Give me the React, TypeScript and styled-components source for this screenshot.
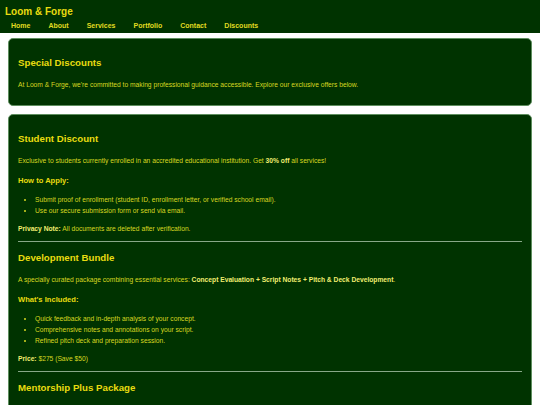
import styled, { createGlobalStyle } from "styled-components";

const GlobalStyle = createGlobalStyle`
  body {
    margin: 0;
    background: #ffffff;
    font-family: "Liberation Sans", Arial, sans-serif;
    color: #d8d820;
  }
`;

const Header = styled.header`
  background: #003300;
  padding: 6px 5px 3px;
`;

const Title = styled.h1`
  margin: 0;
  font-size: 10px;
  line-height: 12px;
  font-weight: bold;
  color: #e8dc10;
`;

const Nav = styled.nav`
  display: flex;
  gap: 18px;
  padding: 4px 0 0 6px;
  line-height: 8px;
`;

const NavLink = styled.a`
  font-size: 7px;
  font-weight: bold;
  color: #e0dc20;
  text-decoration: none;
`;

const Main = styled.main`
  display: flex;
  flex-direction: column;
  gap: 8px;
  padding: 5px 8px 8px;
`;

const Card = styled.section`
  background: #003300;
  border: 1px solid #5f8f5f;
  border-radius: 5px;
  padding: 9px 9px 8px;
`;

const Block = styled.div<{ $divider?: boolean }>`
  border-bottom: ${(p) => (p.$divider ? "1.5px solid #88a888" : "none")};

  & + & {
    padding-top: 1px;
  }
`;

const Heading = styled.h2`
  margin: 9px 0 12px;
  font-size: 9.7px;
  line-height: 12px;
  font-weight: bold;
  color: #e8dc10;
`;

const SubHeading = styled.h3`
  margin: 11px 0 9px;
  font-size: 7.6px;
  line-height: 9px;
  font-weight: bold;
  color: #e8dc10;
`;

const Text = styled.p`
  margin: 8px 0;
  font-size: 6.7px;
  line-height: 8px;
`;

const List = styled.ul`
  margin: 9px 0;
  padding-left: 17px;
  font-size: 6.7px;
  line-height: 11px;
`;

const Strong = styled.strong`
  font-weight: bold;
  color: #f0ee70;
`;

export default function App() {
  return (
    <>
      <GlobalStyle />
      <Header>
        <Title>Loom &amp; Forge</Title>
        <Nav>
          {["Home", "About", "Services", "Portfolio", "Contact", "Discounts"].map((l) => (
            <NavLink key={l} href="#">
              {l}
            </NavLink>
          ))}
        </Nav>
      </Header>
      <Main>
        <Card>
          <Heading>Special Discounts</Heading>
          <Text>
            At Loom &amp; Forge, we're committed to making professional guidance accessible. Explore
            our exclusive offers below.
          </Text>
        </Card>
        <Card>
          <Block $divider>
            <Heading>Student Discount</Heading>
            <Text>
              Exclusive to students currently enrolled in an accredited educational institution. Get{" "}
              <Strong>30% off</Strong> all services!
            </Text>
            <SubHeading>How to Apply:</SubHeading>
            <List>
              <li>Submit proof of enrollment (student ID, enrollment letter, or verified school email).</li>
              <li>Use our secure submission form or send via email.</li>
            </List>
            <Text>
              <Strong>Privacy Note:</Strong> All documents are deleted after verification.
            </Text>
          </Block>
          <Block $divider>
            <Heading>Development Bundle</Heading>
            <Text>
              A specially curated package combining essential services:{" "}
              <Strong>Concept Evaluation + Script Notes + Pitch &amp; Deck Development</Strong>.
            </Text>
            <SubHeading>What's Included:</SubHeading>
            <List>
              <li>Quick feedback and in-depth analysis of your concept.</li>
              <li>Comprehensive notes and annotations on your script.</li>
              <li>Refined pitch deck and preparation session.</li>
            </List>
            <Text>
              <Strong>Price:</Strong> $275 (Save $50)
            </Text>
          </Block>
          <Block>
            <Heading>Mentorship Plus Package</Heading>
          </Block>
        </Card>
      </Main>
    </>
  );
}
